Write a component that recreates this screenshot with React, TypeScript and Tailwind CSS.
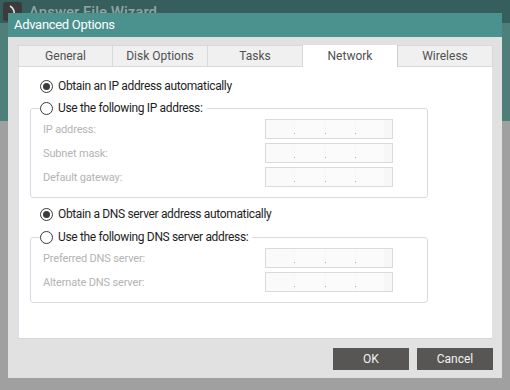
import React from "react";

const Radio = ({ checked }: { checked?: boolean }) => (
  <span className="w-[13px] h-[13px] rounded-full border border-[#3a3a3a] bg-white flex items-center justify-center shrink-0">
    {checked && <span className="w-[7px] h-[7px] rounded-full bg-[#3c3c3c]" />}
  </span>
);

const Dot = () => <span className="w-px h-px bg-[#b4aca4] mb-[4px] shrink-0" />;

const IpBox = () => (
  <div className="w-[128px] h-[20px] border border-[#dadada] bg-[#f7f7f7] flex items-end">
    <span className="w-[28px] h-full bg-[#fafafa]" />
    <Dot />
    <span className="w-[30px] h-full bg-[#fbfbfb]" />
    <Dot />
    <span className="w-[29px] h-full bg-[#fbfbfb]" />
    <Dot />
    <span className="w-[28px] h-full bg-[#fbfbfb]" />
  </div>
);

const Row = ({ label }: { label: string }) => (
  <div className="flex items-center h-[24px]">
    <span className="w-[222px] text-[11px] tracking-[-0.15px] text-[#b3b3b3] leading-none">{label}</span>
    <IpBox />
  </div>
);

const RadioLine = ({ checked, text }: { checked?: boolean; text: string }) => (
  <div className="flex items-center gap-[5px] h-[16px]">
    <Radio checked={checked} />
    <span className="text-[12px] tracking-[-0.35px] text-[#1e1e1e] leading-none whitespace-nowrap">{text}</span>
  </div>
);

const Group = ({ title, rows }: { title: string; rows: string[] }) => (
  <fieldset className="w-[398px] border border-[#d6dce2] rounded-[3px] pb-[8px] min-w-0">
    <legend className="ml-[9px] pr-[4px]">
      <RadioLine text={title} />
    </legend>
    <div className="pl-[12px] mt-[1px] flex flex-col">
      {rows.map((r) => (
        <Row key={r} label={r} />
      ))}
    </div>
  </fieldset>
);

const tabs = ["General", "Disk Options", "Tasks", "Network", "Wireless"];

export default function App() {
  return (
    <div className="relative w-[510px] h-[390px] overflow-hidden bg-[#a0a0a0] font-['Roboto','Noto_Sans',sans-serif]">
      <div className="h-[121px] bg-[#4e7f7b] flex flex-col">
        <div className="h-[23px] bg-[#355e5c] flex items-start gap-[7px] pl-[3px] pt-[2px]">
          <div className="w-[19px] h-[19px] rounded-[3px] bg-[#3b3b3b] flex items-center justify-center">
            <svg width="12" height="14" viewBox="0 0 12 14">
              <path d="M3 1 C7 3 8 7 7 13" stroke="#e8e8e8" strokeWidth="1.6" fill="none" />
            </svg>
          </div>
          <span className="text-[15px] leading-[20px] text-[#8fa5a3] font-medium">Answer File Wizard</span>
        </div>
      </div>

      <div className="absolute left-[8px] top-[13px] w-[494px] h-[365px] bg-[#e1e1e1] flex flex-col">
        <div className="h-[24px] bg-[#4b918d] flex items-center pl-[6px] text-white text-[13px] tracking-[-0.3px]">
          Advanced Options
        </div>
        <div className="pt-[8px] pl-[10px] flex flex-col">
          <div className="flex h-[22px]">
            {tabs.map((t, i) => {
              const sel = t === "Network";
              return (
                <div
                  key={t}
                  className={
                    sel
                      ? "w-[95px] h-[22px] bg-white border-r border-[#cfcfcf] flex items-center justify-center text-[12px] text-[#505050]"
                      : i === 0
                      ? "w-[95px] h-[22px] bg-[#f0f0f0] border border-[#d9d9d9] flex items-center justify-center text-[12px] text-[#505050]"
                      : "w-[95px] h-[22px] bg-[#f0f0f0] border-t border-r border-b border-[#d9d9d9] flex items-center justify-center text-[12px] text-[#505050]"
                  }
                >
                  {t}
                </div>
              );
            })}
          </div>
          <div className="w-[474px] h-[272px] bg-white border-l border-[#dedeea] border-b border-b-[#d6d6d6] pt-[11px] pl-[11px] flex flex-col">
            <div className="pl-[10px]">
              <RadioLine checked text="Obtain an IP address automatically" />
            </div>
            <div className="mt-[6px]">
              <Group
                title="Use the following IP address:"
                rows={["IP address:", "Subnet mask:", "Default gateway:"]}
              />
            </div>
            <div className="pl-[10px] mt-[8px]">
              <RadioLine checked text="Obtain a DNS server address automatically" />
            </div>
            <div className="mt-[7px]">
              <Group
                title="Use the following DNS server address:"
                rows={["Preferred DNS server:", "Alternate DNS server:"]}
              />
            </div>
          </div>
        </div>
        <div className="flex justify-end gap-[8px] pr-[9px] mt-[9px]">
          <button className="w-[76px] h-[22px] bg-[#585654] text-[#f2f2f2] text-[12px] flex items-center justify-center">
            OK
          </button>
          <button className="w-[76px] h-[22px] bg-[#585654] text-[#f2f2f2] text-[12px] flex items-center justify-center">
            Cancel
          </button>
        </div>
      </div>
    </div>
  );
}
